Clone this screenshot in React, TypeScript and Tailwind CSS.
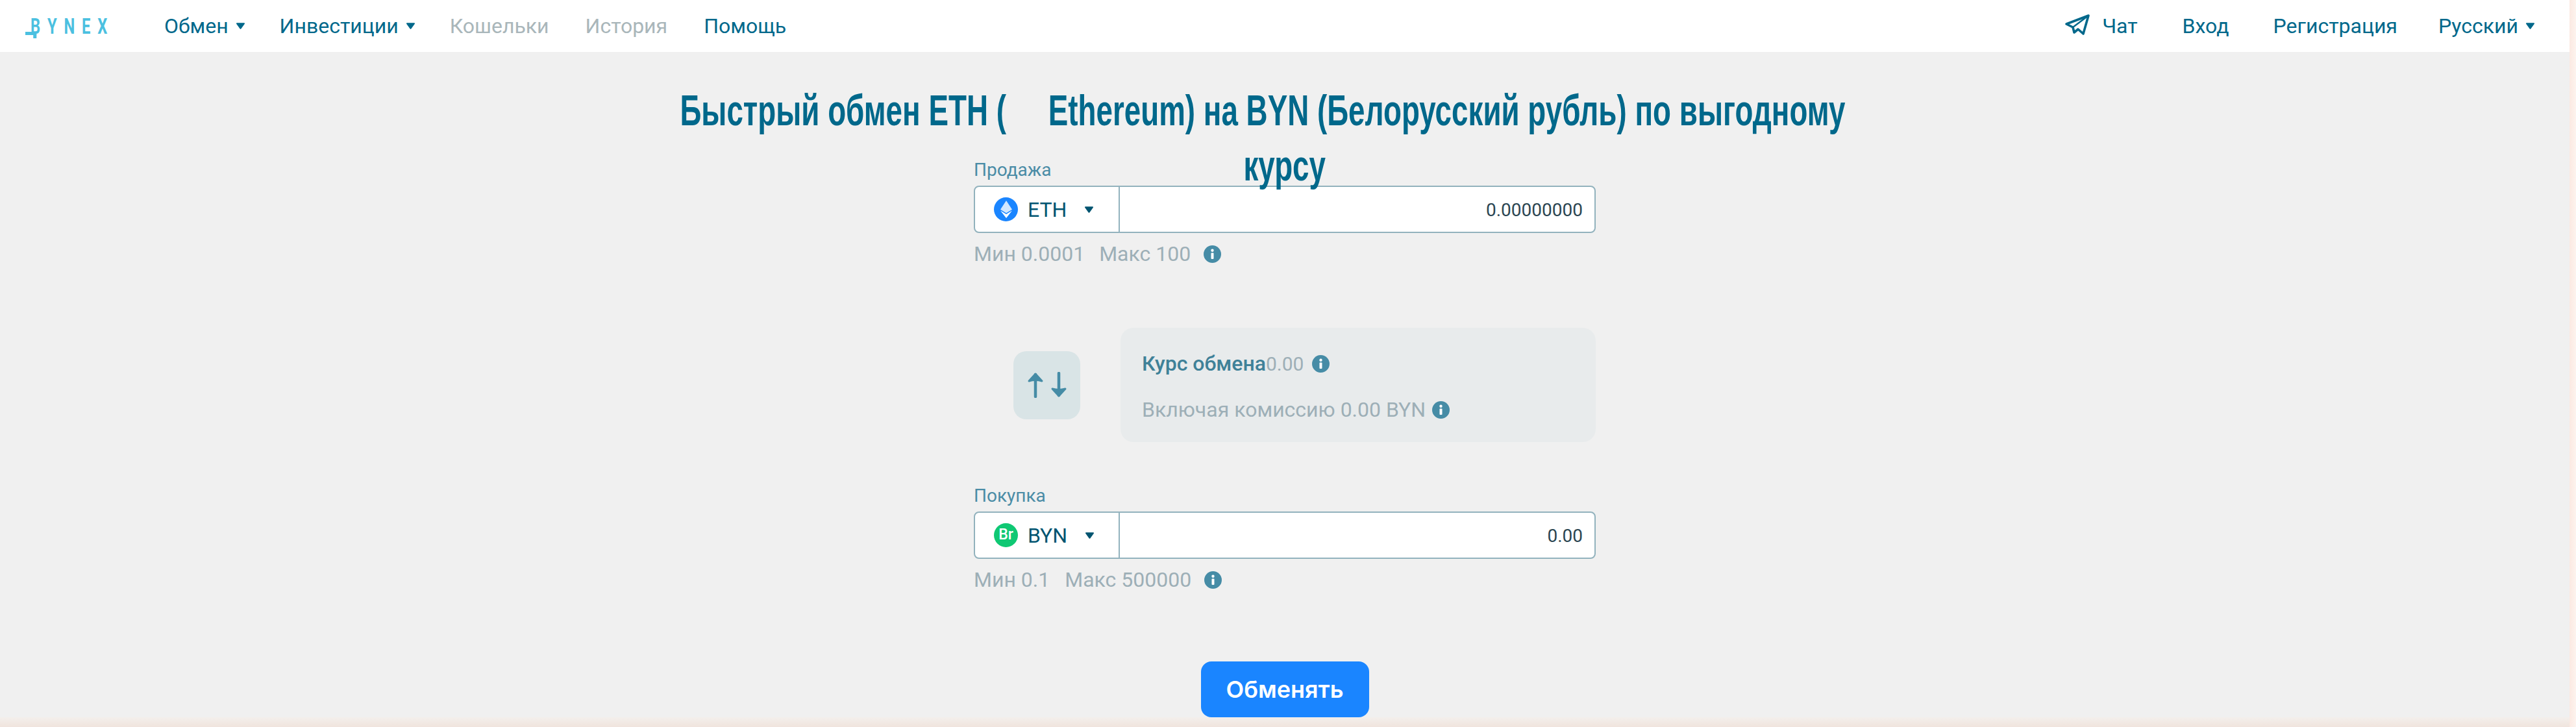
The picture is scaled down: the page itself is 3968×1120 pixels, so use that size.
const Caret = ({ className = "" }: { className?: string }) => (
  <svg viewBox="0 0 12 9" className={`h-[10px] w-[13px] ${className}`} fill="currentColor">
    <path d="M1 0h10c.9 0 1.3 1 .7 1.7L6.7 8.6c-.4.5-1 .5-1.4 0L.3 1.7C-.3 1 .1 0 1 0z" />
  </svg>
);

const Info = () => (
  <svg viewBox="0 0 27 27" className="h-[27px] w-[27px]">
    <circle cx="13.5" cy="13.5" r="13.5" fill="#468ca6" />
    <rect x="11.5" y="11.5" width="4" height="9.5" rx="1" fill="#fff" />
    <circle cx="13.5" cy="7.8" r="2.2" fill="#fff" />
  </svg>
);

function Logo() {
  return (
    <div className="flex origin-left scale-x-[.72] items-center text-[33px] font-bold leading-none tracking-[15px] text-[#4bc0e0]">
      <span className="relative ml-[11px]">
        B
        <span className="absolute -left-[11px] bottom-[3px] h-[5px] w-[24px] bg-[#4bc0e0]" />
        <span className="absolute left-[6px] -bottom-[2px] h-[6px] w-[7px] bg-[#4bc0e0]" />
      </span>
      <span>YNEX</span>
    </div>
  );
}

function PlaneIcon() {
  return (
    <svg viewBox="6 6 40 34" className="h-[34px] w-[40px]" fill="none" stroke="currentColor" strokeWidth="3.6" strokeLinejoin="round">
      <path d="M43 9 9 22l10 5 2 8 6-5 8 7z" />
      <path d="M43 9 19 27" strokeWidth="2.4" />
    </svg>
  );
}

function CurrencyField({
  label,
  code,
  icon,
  value,
  limits,
  gap,
}: {
  label: string;
  code: string;
  icon: React.ReactNode;
  value: string;
  limits: [string, string];
  gap: string;
}) {
  return (
    <div className="w-[958px]">
      <div className="mb-[8px] text-[28px] leading-[33px] text-[#4a8ca6]">{label}</div>
      <div className="flex h-[73px] overflow-hidden rounded-[8px] border-2 border-[#92b2bd] bg-white">
        <div className="flex w-[223px] items-center border-r-2 border-[#92b2bd] pl-[29px]">
          {icon}
          <span className="ml-[15px] text-[32px] text-[#005470]">{code}</span>
          <Caret className="ml-[28px] text-[#005470]" />
        </div>
        <div className="flex flex-1 items-center justify-end pr-[18px] pt-[3px] text-[28px] text-[#2c4652]">{value}</div>
      </div>
      <div className="mt-[15px] flex items-center text-[32px] leading-[35px] text-[#9dafb7]">
        <span>{limits[0]}</span>
        <span className={gap}>{limits[1]}</span>
        <span className="ml-[20px]">
          <Info />
        </span>
      </div>
    </div>
  );
}

function SwapIcon() {
  return (
    <svg viewBox="0 0 62 40" className="h-[40px] w-[62px]" fill="#468ca6" stroke="#468ca6" strokeWidth="4.5" strokeLinecap="round" strokeLinejoin="round">
      <path d="M13 38V4" />
      <path d="M3 14 13 3l10 11q-10-3-20 0z" strokeWidth="3" />
      <path d="M49 2v34" />
      <path d="M39 26l10 11 10-11q-10 3-20 0z" strokeWidth="3" />
    </svg>
  );
}

export default function App() {
  return (
    <div className="flex h-[1120px] w-[3968px] overflow-hidden font-['Roboto',sans-serif]">
      <div className="flex h-[1120px] w-[3958px] shrink-0 flex-col">
        <div className="flex h-[1105px] shrink-0 flex-col bg-[#f0f0f0]">
          <header className="flex h-[80px] shrink-0 items-center justify-between bg-white pl-[39px] pr-[54px] text-[32px] text-[#00688b]">
            <div className="flex items-center">
              <div className="w-[214px]">
                <Logo />
              </div>
              <nav className="flex items-center">
                <a className="flex items-center">
                  Обмен <Caret className="ml-[12px]" />
                </a>
                <a className="ml-[54px] flex items-center">
                  Инвестиции <Caret className="ml-[12px]" />
                </a>
                <a className="ml-[54px] text-[#a9b6ba]">Кошельки</a>
                <a className="ml-[56px] text-[#a9b6ba]">История</a>
                <a className="ml-[56px]">Помощь</a>
              </nav>
            </div>
            <div className="flex items-center">
              <span className="mr-[18px] -mt-[4px]">
                <PlaneIcon />
              </span>
              <a>Чат</a>
              <a className="ml-[69px]">Вход</a>
              <a className="ml-[68px]">Регистрация</a>
              <a className="ml-[63px] flex items-center">
                Русский <Caret className="ml-[12px]" />
              </a>
            </div>
          </header>

          <main className="flex flex-1 flex-col items-center">
            <h1 className="flex h-[165px] w-[2000px] flex-col items-center pt-[47px] font-['Liberation_Sans',sans-serif] text-[67px] font-bold leading-[85px] whitespace-nowrap text-[#00688b]">
              <span className="block scale-x-[.683] pr-[100px]">
                Быстрый обмен ETH (<span className="inline-block w-[95px]" />
                Ethereum) на BYN (Белорусский рубль) по выгодному
              </span>
              <span className="block scale-x-[.683]">курсу</span>
            </h1>

            <CurrencyField
              label="Продажа"
              code="ETH"
              value="0.00000000"
              limits={["Мин 0.0001", "Макс 100"]}
              gap="ml-[22px]"
              icon={
                <span className="flex h-[37px] w-[37px] items-center justify-center rounded-full bg-[#1a85ff]">
                  <svg viewBox="0 0 16 24" className="h-[27px] w-[18px]" fill="#fff">
                    <path d="M8 0 0 12.2 8 17l8-4.8L8 0z" opacity=".8" />
                    <path d="M8 18.6 0 13.8 8 24l8-10.2-8 4.8z" />
                  </svg>
                </span>
              }
            />

            <div className="mt-[96px] flex w-[958px] items-center">
              <div className="ml-[61px] flex h-[105px] w-[103px] items-center justify-center rounded-[20px] bg-[#d9e4e6]">
                <SwapIcon />
              </div>
              <div className="ml-[62px] flex h-[176px] w-[732px] flex-col justify-center gap-[44px] rounded-[20px] bg-[#e8ebec] pl-[33px] pt-[6px] text-[32px] leading-[27px]">
                <div className="flex items-center">
                  <span className="font-medium text-[#3f8198]">Курс обмена</span>
                  <span className="text-[30px] text-[#9dafb7]">0.00</span>
                  <span className="ml-[13px]">
                    <Info />
                  </span>
                </div>
                <div className="flex items-center text-[#9dafb7]">
                  <span>Включая комиссию 0.00 BYN</span>
                  <span className="ml-[10px]">
                    <Info />
                  </span>
                </div>
              </div>
            </div>

            <div className="mt-[66px]">
              <CurrencyField
                label="Покупка"
                code="BYN"
                value="0.00"
                limits={["Мин 0.1", "Макс 500000"]}
                gap="ml-[23px]"
                icon={
                  <span className="flex h-[37px] w-[37px] items-center justify-center rounded-full bg-[#0fc873] text-[23px] font-medium text-white">
                    Br
                  </span>
                }
              />
            </div>

            <button className="mt-auto flex h-[86px] w-[259px] items-center justify-center rounded-[16px] bg-[#1a85ff] font-['Inter',sans-serif] text-[36px] font-semibold text-white">
              Обменять
            </button>
          </main>
        </div>
        <div className="flex-1 bg-linear-to-b from-[#f3efec] to-[#f0e4dd]" />
      </div>
      <div className="flex-1 bg-linear-to-r from-[#fbe9e2] to-[#fdf3ee]" />
    </div>
  );
}
